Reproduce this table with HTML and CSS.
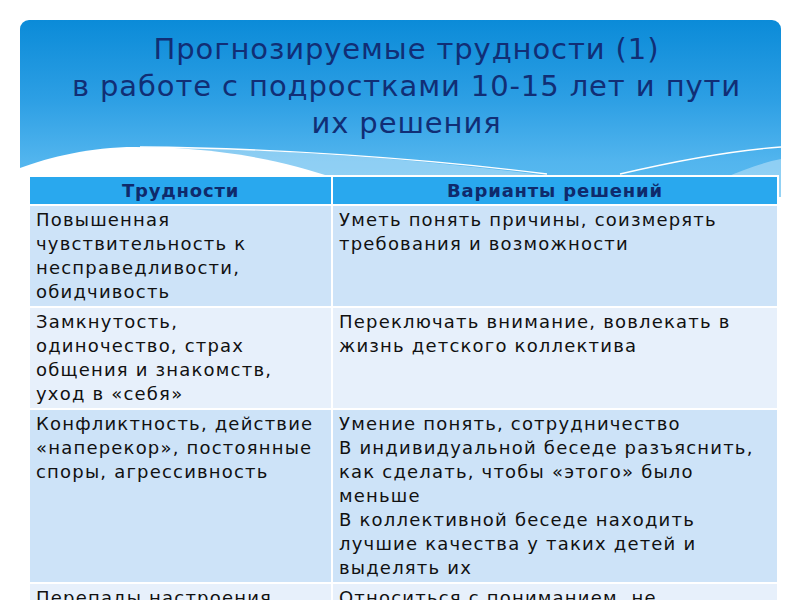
FILE: index.html
```html
<!DOCTYPE html>
<html lang="ru">
<head>
<meta charset="utf-8">
<link rel="stylesheet" href="styles.css">
</head>
<body>
<div class="slide">
  <header class="banner">
    <svg class="waves" viewBox="0 0 761 177" preserveAspectRatio="none" aria-hidden="true">
      <path d="M120,127 C250,128 420,140 560,160 L560,177 L120,177 Z" fill="#ffffff" fill-opacity="0.35"/>
      <path d="M120,127 C250,128 400,138 527,154" fill="none" stroke="#ffffff" stroke-width="1.3"/>
      <path d="M600,154 C660,140 720,130 761,127" fill="none" stroke="#ffffff" stroke-width="1.3"/>
      <path d="M660,177 C700,160 730,145 761,139 L761,177 Z" fill="#ffffff" fill-opacity="0.35"/>
      <path d="M0,148 C30,137 70,127 115,127 C180,127 250,135 320,160 L320,177 L0,177 Z" fill="#ffffff"/>
    </svg>
    <h1 class="title">Прогнозируемые трудности (1)<br>в работе с подростками 10-15 лет и пути<br>их решения</h1>
  </header>
  <table class="grid">
    <colgroup><col class="c1"><col class="c2"></colgroup>
    <thead>
      <tr><th>Трудности</th><th>Варианты решений</th></tr>
    </thead>
    <tbody>
      <tr class="odd">
        <td>Повышенная чувствительность к несправедливости, обидчивость</td>
        <td>Уметь понять причины, соизмерять требования и возможности</td>
      </tr>
      <tr class="even">
        <td>Замкнутость, одиночество, страх общения и знакомств, уход в «себя»</td>
        <td>Переключать внимание, вовлекать в жизнь детского коллектива</td>
      </tr>
      <tr class="odd">
        <td>Конфликтность, действие «наперекор», постоянные споры, агрессивность</td>
        <td>Умение понять, сотрудничество<br>В индивидуальной беседе разъяснить, как сделать, чтобы «этого» было меньше<br>В коллективной беседе находить лучшие качества у таких детей и выделять их</td>
      </tr>
      <tr class="even">
        <td>Перепады настроения</td>
        <td>Относиться с пониманием, не</td>
      </tr>
    </tbody>
  </table>
</div>
</body>
</html>
```
FILE: styles.css
```css
html, body {
  margin: 0;
  padding: 0;
  background: #ffffff;
  overflow: hidden;
}
body {
  width: 800px;
  height: 600px;
  font-family: "DejaVu Sans", "Liberation Sans", sans-serif;
}
.slide {
  padding: 20px 19px 0 20px;
}
.banner {
  position: relative;
  height: 177px;
  border-radius: 9px 9px 0 0;
  background: linear-gradient(to bottom, #0b8bd8 0%, #2d9fe4 45%, #52b5ee 80%, #5cbcf0 100%);
  overflow: hidden;
}
.waves {
  position: absolute;
  left: 0;
  top: 0;
  width: 761px;
  height: 177px;
}
.title {
  position: relative;
  margin: 0;
  padding-top: 11px;
  padding-left: 12px;
  text-align: center;
  font-weight: normal;
  font-size: 29px;
  line-height: 37px;
  letter-spacing: 0.9px;
  color: #112e75;
}
.grid {
  margin: -22px 0 0 8px;
  width: 751px;
  border-collapse: collapse;
  table-layout: fixed;
  position: relative;
}
.c1 { width: 303px; }
.grid th, .grid td {
  border: 2px solid #ffffff;
  text-align: left;
  vertical-align: top;
}
.grid th {
  background: #29a8ee;
  color: #0f2a6b;
  font-weight: bold;
  font-size: 18px;
  letter-spacing: 0.8px;
  text-align: center;
  height: 26px;
  padding: 1px 7px 0;
  line-height: 26px;
}
.grid td {
  font-size: 18px;
  line-height: 24px;
  letter-spacing: 1.2px;
  color: #111111;
  padding: 2px 7px 2px 6px;
}
.odd td { background: #cde3f8; }
.even td { background: #e7f0fb; }
```
